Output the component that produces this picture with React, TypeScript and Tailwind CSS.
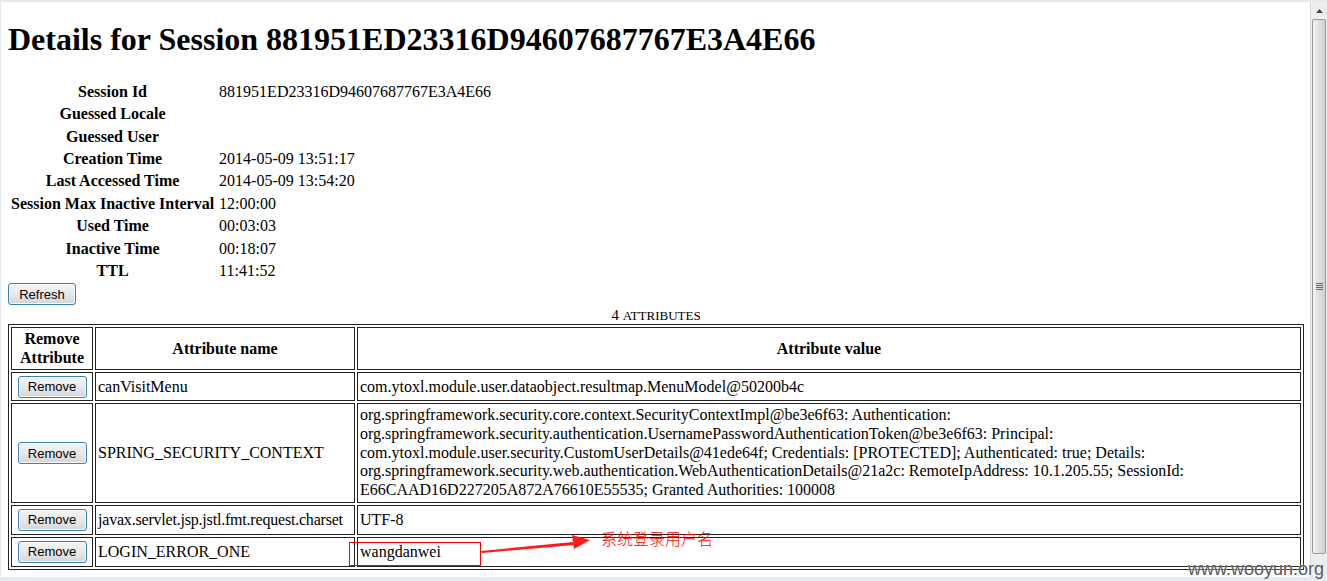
import React from "react";

const serif = { fontFamily: '"Liberation Serif", "Times New Roman", serif' };

function Btn({ label, w }: { label: string; w: string }) {
  return (
    <button
      className={`${w} h-[22px] rounded-[3px] border border-[#3c7fb1] bg-gradient-to-b from-[#f4f4f4] via-[#e8e8e8] to-[#d2d6da] text-[13px] leading-none text-black shadow-[inset_0_0_0_1px_#f8fbfd]`}
      style={{ fontFamily: '"Liberation Sans", Arial, sans-serif' }}
    >
      {label}
    </button>
  );
}

const info: [string, string][] = [
  ["Session Id", "881951ED23316D94607687767E3A4E66"],
  ["Guessed Locale", ""],
  ["Guessed User", ""],
  ["Creation Time", "2014-05-09 13:51:17"],
  ["Last Accessed Time", "2014-05-09 13:54:20"],
  ["Session Max Inactive Interval", "12:00:00"],
  ["Used Time", "00:03:03"],
  ["Inactive Time", "00:18:07"],
  ["TTL", "11:41:52"],
];

const cell = "border border-[#222] p-[2px] align-middle";

export default function App() {
  return (
    <div className="w-[1327px] h-[581px] overflow-hidden bg-[#e4eaf0] pt-[2px] pl-[1px] pb-[4px] flex">
      <div className="flex-1 relative bg-white text-black leading-[1.15] text-[16px] px-[7px] overflow-hidden" style={serif}>
        <h1 className="text-[32px] font-bold mt-[19px] mb-[22px] leading-[1.15]">
          Details for Session 881951ED23316D94607687767E3A4E66
        </h1>
        <table className="border-separate border-spacing-[2px]">
          <tbody>
            {info.map(([k, v]) => (
              <tr key={k}>
                <th className="p-[1px] text-center font-bold">{k}</th>
                <td className="p-[1px] pl-[2px] h-[20.4px]">{v}</td>
              </tr>
            ))}
          </tbody>
        </table>
        <div>
          <Btn label="Refresh" w="w-[68px]" />
        </div>
        <table className="w-[1296px] table-fixed border-separate border-spacing-[2px] border border-[#222]">
          <caption className="pt-[2px] leading-[16px] text-center">
            <span className="text-[15px]">4 </span>
            <span className="text-[13px]">ATTRIBUTES</span>
          </caption>
          <colgroup>
            <col className="w-[82px]" />
            <col className="w-[260px]" />
            <col />
          </colgroup>
          <thead>
            <tr>
              <th className={`${cell} h-[43px] text-center font-bold`}>Remove Attribute</th>
              <th className={`${cell} text-center font-bold`}>Attribute name</th>
              <th className={`${cell} text-center font-bold`}>Attribute value</th>
            </tr>
          </thead>
          <tbody>
            <tr>
              <td className={`${cell} h-[29px] text-center`}>
                <Btn label="Remove" w="w-[69px]" />
              </td>
              <td className={cell}>canVisitMenu</td>
              <td className={cell}>com.ytoxl.module.user.dataobject.resultmap.MenuModel@50200b4c</td>
            </tr>
            <tr>
              <td className={`${cell} text-center`}>
                <Btn label="Remove" w="w-[69px]" />
              </td>
              <td className={cell}>SPRING_SECURITY_CONTEXT</td>
              <td className={`${cell} leading-[18.7px]`}>
                org.springframework.security.core.context.SecurityContextImpl@be3e6f63: Authentication:
                org.springframework.security.authentication.UsernamePasswordAuthenticationToken@be3e6f63: Principal:
                com.ytoxl.module.user.security.CustomUserDetails@41ede64f; Credentials: [PROTECTED]; Authenticated: true; Details:
                org.springframework.security.web.authentication.WebAuthenticationDetails@21a2c: RemoteIpAddress: 10.1.205.55; SessionId:
                E66CAAD16D227205A872A76610E55535; Granted Authorities: 100008
              </td>
            </tr>
            <tr>
              <td className={`${cell} h-[30px] text-center`}>
                <Btn label="Remove" w="w-[69px]" />
              </td>
              <td className={`${cell} whitespace-nowrap tracking-[-0.2px]`}>javax.servlet.jsp.jstl.fmt.request.charset</td>
              <td className={cell}>UTF-8</td>
            </tr>
            <tr>
              <td className={`${cell} h-[30px] text-center`}>
                <Btn label="Remove" w="w-[69px]" />
              </td>
              <td className={cell}>LOGIN_ERROR_ONE</td>
              <td className={cell}>wangdanwei</td>
            </tr>
          </tbody>
        </table>

        {/* annotation overlay */}
        <div className="absolute left-[348px] top-[540px] w-[132px] h-[24px] border-[1.5px] border-[#ff0000]" />
        <svg className="absolute left-[478px] top-[530px]" width="120" height="24" viewBox="0 0 120 24">
          <polygon points="2,19 94,10 95,13 3,21" fill="#ff1a1a" />
          <polygon points="93,3 111,8 95,17" fill="#ff1a1a" />
        </svg>
        <div
          className="absolute left-[600px] top-[528px] text-[16px] leading-none text-[#ff0000]"
          style={{ fontFamily: '"Noto Sans CJK SC", sans-serif', fontWeight: 300 }}
        >
          系统登录用户名
        </div>
      </div>
      {/* scrollbar */}
      <div className="w-[17px] bg-[#eeeeee] border-l border-[#dcdcdc] flex flex-col items-center">
        <div className="h-[17px] flex items-center justify-center">
          <svg width="7" height="4" viewBox="0 0 7 4">
            <polygon points="0,4 3.5,0 7,4" fill="#444" />
          </svg>
        </div>
        <div className="w-[14px] h-[535px] rounded-[2px] border border-[#9a9a9a] bg-gradient-to-r from-[#f2f2f2] via-[#e0e0e0] to-[#cfcfcf] flex items-center justify-center">
          <div className="flex flex-col gap-[1px]">
            <div className="w-[7px] h-[1px] bg-[#666]" />
            <div className="w-[7px] h-[1px] bg-[#666]" />
            <div className="w-[7px] h-[1px] bg-[#666]" />
            <div className="w-[7px] h-[1px] bg-[#666]" />
          </div>
        </div>
      </div>
      <div
        className="absolute left-[1188px] top-[558px] text-[18px] text-[#5a5a5a] leading-[22px]"
        style={{ fontFamily: '"Liberation Sans", Arial, sans-serif', textShadow: "0 0 2px #fff" }}
      >
        www.wooyun.org
      </div>
    </div>
  );
}
